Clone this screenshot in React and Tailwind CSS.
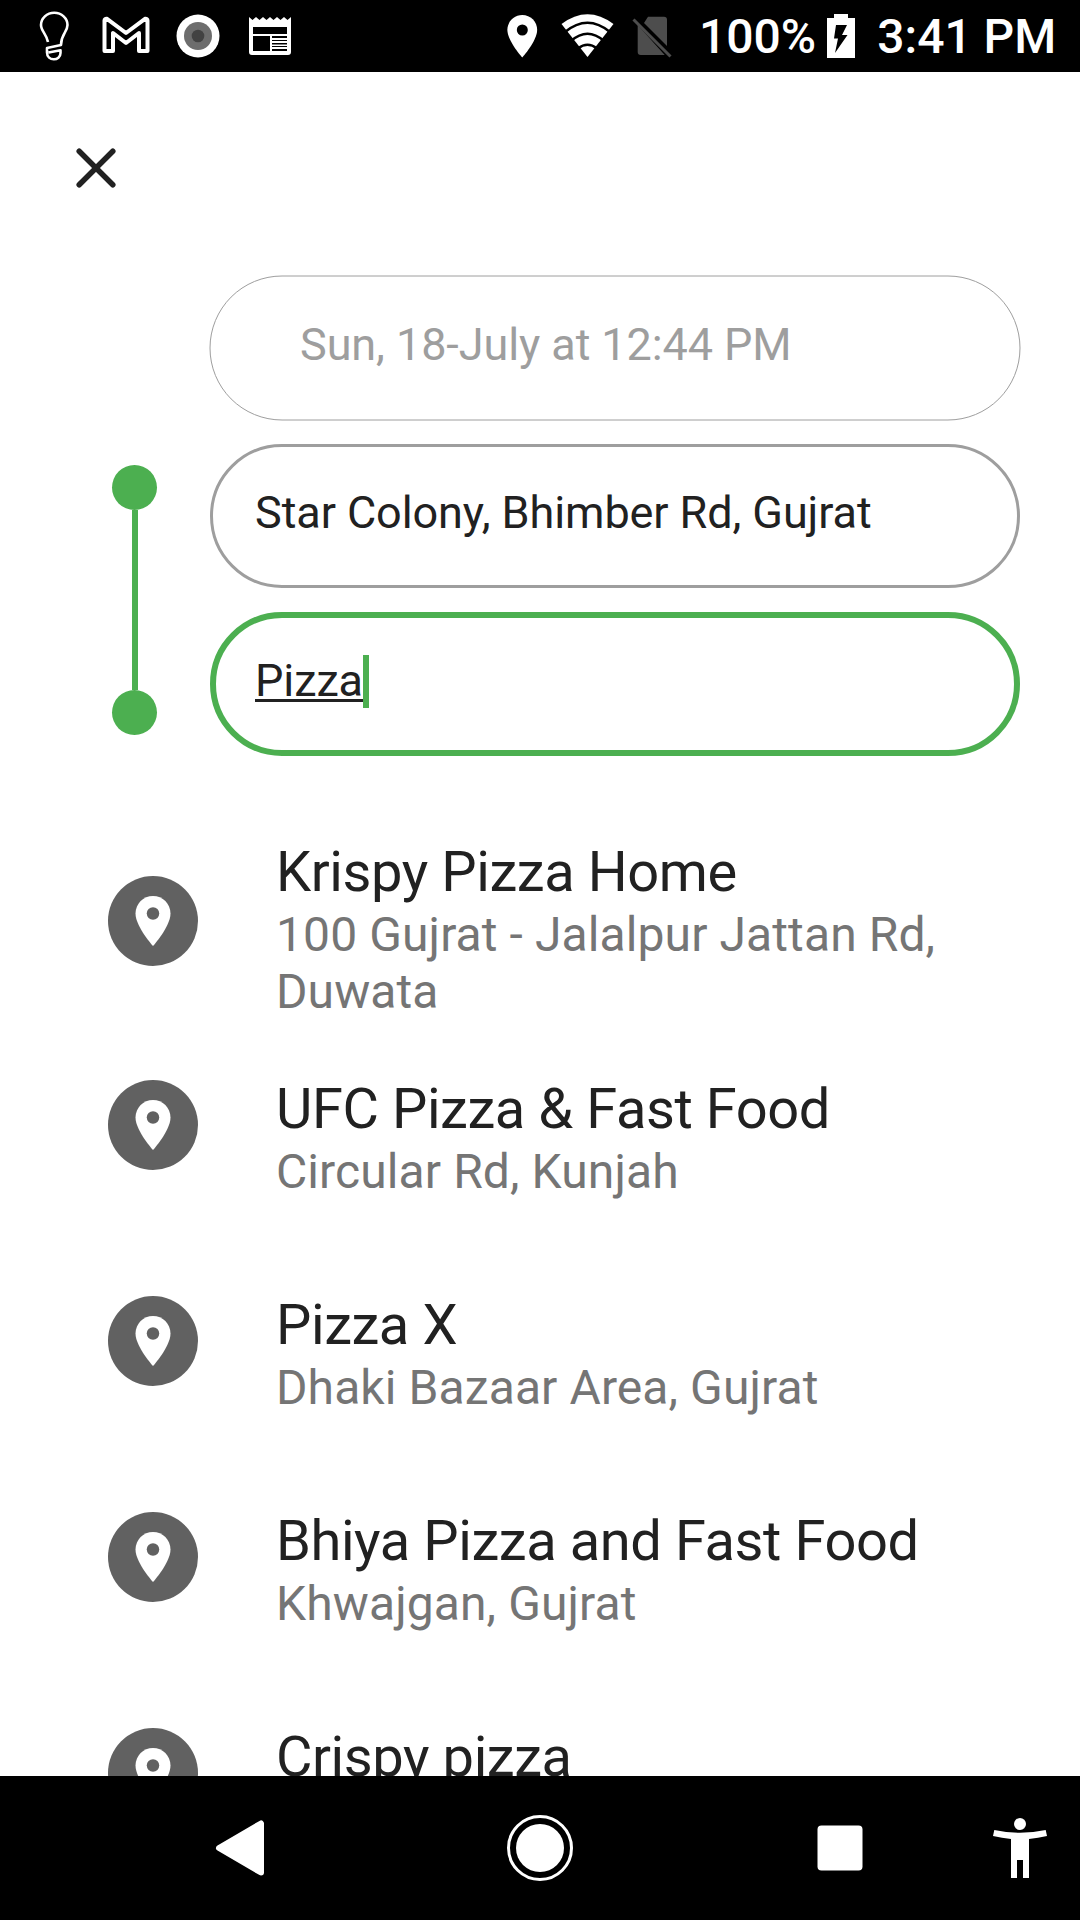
import React from "react";

const places = [
  { name: "Krispy Pizza Home", lines: ["100 Gujrat - Jalalpur Jattan Rd,", "Duwata"], tall: true },
  { name: "UFC Pizza & Fast Food", lines: ["Circular Rd, Kunjah"] },
  { name: "Pizza X", lines: ["Dhaki Bazaar Area, Gujrat"] },
  { name: "Bhiya Pizza and Fast Food", lines: ["Khwajgan, Gujrat"] },
  { name: "Crispy pizza", lines: [] },
];

const PIN = "M12 2C8.13 2 5 5.13 5 9c0 5.25 7 13 7 13s7-7.75 7-13c0-3.87-3.13-7-7-7z";

function StatusBar() {
  return (
    <header className="flex h-[72px] shrink-0 bg-black text-white">
      <svg className="h-[72px] w-[320px]" viewBox="0 0 320 72" fill="none">
        <path d="M48 42C46.500 34 41 31 41 25a13 12 0 0 1 26.500 0C67.500 32 61 34 61 45L47 48V52.500C47 61.500 60.500 61.500 60.500 53V50.200L48.500 52.500" stroke="#fff" strokeWidth="2.600" strokeLinejoin="round" />
        <path d="M104.500 51V20.500Q104.500 18.500 107 18.800L126 33L145 18.800Q147.500 18.500 147.500 20.500V51H139V33L126 43L113 33V51Z" stroke="#fff" strokeWidth="4" strokeLinejoin="round" />
        <circle cx="198" cy="36" r="21.500" fill="#fff" />
        <circle cx="198" cy="36" r="14" fill="#6d6d6d" />
        <circle cx="198" cy="36" r="6.300" fill="#424242" />
        <path d="M249 17l3.500 3 3.500-3 3.500 3 3.500-3 3.500 3 3.500-3 3.500 3 3.500-3 3.500 3 3.500-3 3.500 3 3.500-3V52a3 3 0 0 1-3 3H252a3 3 0 0 1-3-3Z" fill="#fff" />
        <path d="M253 27h34v7h-34zM253 36h17v15h-17zM272 36h15v2h-15zM272 40h15v1h-15zM272 43h15v1.500h-15zM272 46h15v1h-15zM272 49h15v2h-15z" fill="#000" />
      </svg>
      <svg className="ml-[170px] h-[72px] w-[200px]" viewBox="490 0 200 72">
        <path transform="translate(496.700 10.700) scale(2.130)" d={PIN} fill="#fff" />
        <circle cx="522.300" cy="30" r="5.500" fill="#000" />
        <path d="M561.500 24Q587.500 4.500 613.500 24L587.500 57Z" fill="#fff" />
        <path d="M565 32Q587.500 13.500 610 32M571 41Q587.500 26.500 604 41M578 48.500Q587.500 41 597 48.500" fill="none" stroke="#000" strokeWidth="2.600" />
        <path d="M648 16.700h16a3 3 0 0 1 3 3V46L644 23zM637.700 25V52a3 3 0 0 0 3 3h24z" fill="#4d4d4d" />
        <path d="M633.500 19.500L670.500 56.500" stroke="#4d4d4d" strokeWidth="3" />
      </svg>
      <span className="ml-[9px] mt-[9px] text-[48px] leading-[56px] font-medium whitespace-nowrap">100%</span>
      <svg className="ml-[11px] h-[72px] w-[30px]" viewBox="0 0 30 72">
        <path d="M7 14H21V18H28V58H0V18H7Z" fill="#fff" />
        <path d="M9 25H20L15 35H20.500L8 53L11 38.500H7Z" fill="#000" />
      </svg>
      <span className="ml-[20px] mt-[9px] text-[48px] leading-[56px] font-medium whitespace-nowrap">3:41 PM</span>
    </header>
  );
}

function RouteLine() {
  return (
    <div className="ml-[112px] mt-[189px] flex w-[46px] flex-col items-center">
      <span className="size-[45px] self-start rounded-full bg-[#4caf50]" />
      <span className="h-[180px] w-[6px] bg-[#4caf50]" />
      <span className="size-[45px] self-start rounded-full bg-[#4caf50]" />
    </div>
  );
}

function Place({ place }) {
  return (
    <li className={place.tall ? "flex h-[258px] shrink-0 items-start pt-[54px]" : "flex h-[216px] shrink-0 items-start"}>
      <span className="ml-[108px] flex size-[90px] shrink-0 items-center justify-center rounded-full bg-[#616161]">
        <svg className="size-[60px]" viewBox="0 0 24 24">
          <path d={PIN} fill="#fff" />
          <circle cx="12" cy="9" r="2.500" fill="#616161" />
        </svg>
      </span>
      <div className={place.tall ? "-mt-[37px] ml-[78px]" : "-mt-[4px] ml-[78px]"}>
        <h2 className="mb-px text-[56px] leading-[66px] tracking-[-0.41px] text-[#212121] whitespace-nowrap">{place.name}</h2>
        {place.lines.map((line) => (
          <p key={line} className="text-[48px] leading-[57px] tracking-[0.1px] text-[#757575] whitespace-nowrap">{line}</p>
        ))}
      </div>
    </li>
  );
}

export default function App() {
  return (
    <div className="flex h-[1920px] w-[1080px] flex-col overflow-hidden bg-white font-['Roboto',sans-serif]">
      <StatusBar />
      <div className="flex h-[204px] shrink-0 items-start pl-[60px] pt-[60px]">
        <svg className="size-[72px]" viewBox="0 0 72 72">
          <path d="M19.200 19.200L52.800 52.800M52.800 19.200L19.200 52.800" stroke="#212121" strokeWidth="5.500" strokeLinecap="round" />
        </svg>
      </div>
      <div className="flex h-[546px] shrink-0">
        <RouteLine />
        <div className="ml-[52px] flex w-[810px] flex-col gap-[24px] text-[45px] leading-[53px] tracking-[-0.09px] text-[#212121]">
          <div className="relative h-[144px] pl-[90px] pt-[42px] text-[#9e9e9e]">
            <span className="absolute -left-px -top-px bottom-0 right-0 translate-x-[0.5px] translate-y-[0.5px] rounded-full border border-[#9e9e9e]" />
            <span>Sun, 18-July at 12:44 PM</span>
          </div>
          <div className="h-[144px] rounded-full border-[3px] border-[#9e9e9e] pl-[42px] pt-[39px]">
            <span>Star Colony, Bhimber Rd, Gujrat</span>
          </div>
          <div className="flex h-[144px] items-start rounded-full border-[6px] border-[#4caf50] pl-[39px] pt-[36px]">
            <span className="underline decoration-[2.500px] underline-offset-[3px]">Pizza</span>
            <span className="mt-[1px] h-[53px] w-[6px] bg-[#4caf50]" />
          </div>
        </div>
      </div>
      <ul className="flex h-[954px] shrink-0 flex-col overflow-hidden">
        {places.map((place) => <Place key={place.name} place={place} />)}
      </ul>
      <nav className="flex h-[144px] shrink-0 items-center bg-black">
        <svg className="h-[144px] w-[1080px]" viewBox="0 0 1080 144" fill="#fff">
          <path d="M219 72L261 47.500V96.500Z" stroke="#fff" strokeWidth="6" strokeLinejoin="round" />
          <circle cx="540" cy="72" r="24" />
          <circle cx="540" cy="72" r="31.500" fill="none" stroke="#fff" strokeWidth="3" />
          <rect x="817.500" y="49.500" width="45" height="45" rx="4" />
          <circle cx="1020" cy="48" r="6" />
          <path d="M994.300 54Q1020 59.500 1045.700 54L1047 60Q1038 62 1029 63V102H1023V84H1017V102H1011V63Q1002 62 993 60Z" />
        </svg>
      </nav>
    </div>
  );
}
